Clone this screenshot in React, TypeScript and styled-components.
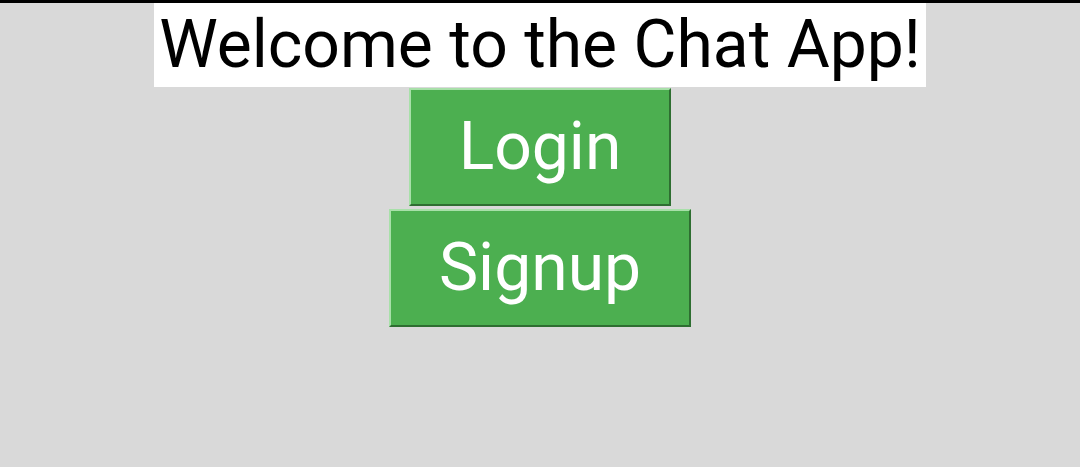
import React from "react";
import styled, { createGlobalStyle } from "styled-components";

const GlobalStyle = createGlobalStyle`
  html, body {
    margin: 0;
    padding: 0;
    height: 100%;
  }
  body {
    background: #d9d9d9;
    border-top: 3px solid #000;
    box-sizing: border-box;
    font-family: Roboto, "Liberation Sans", sans-serif;
  }
`;

const Page = styled.div`
  display: flex;
  flex-direction: column;
  align-items: center;
`;

const Title = styled.h1`
  margin: 0 0 1px;
  padding: 0 5px;
  background: #fff;
  color: #000;
  font-weight: 400;
  font-size: 66px;
  line-height: 84px;
`;

const Button = styled.button`
  margin: 0 0 3px;
  padding: 18px 48px;
  background: #4caf50;
  color: #fff;
  font-family: Roboto, "Liberation Sans", sans-serif;
  font-size: 66px;
  line-height: 78px;
  border: 2px solid;
  border-color: #a8e0a9 #2e6e31 #2e6e31 #a8e0a9;
  cursor: pointer;
`;

export default function App() {
  return (
    <>
      <GlobalStyle />
      <Page>
        <Title>Welcome to the Chat App!</Title>
        <Button>Login</Button>
        <Button>Signup</Button>
      </Page>
    </>
  );
}
